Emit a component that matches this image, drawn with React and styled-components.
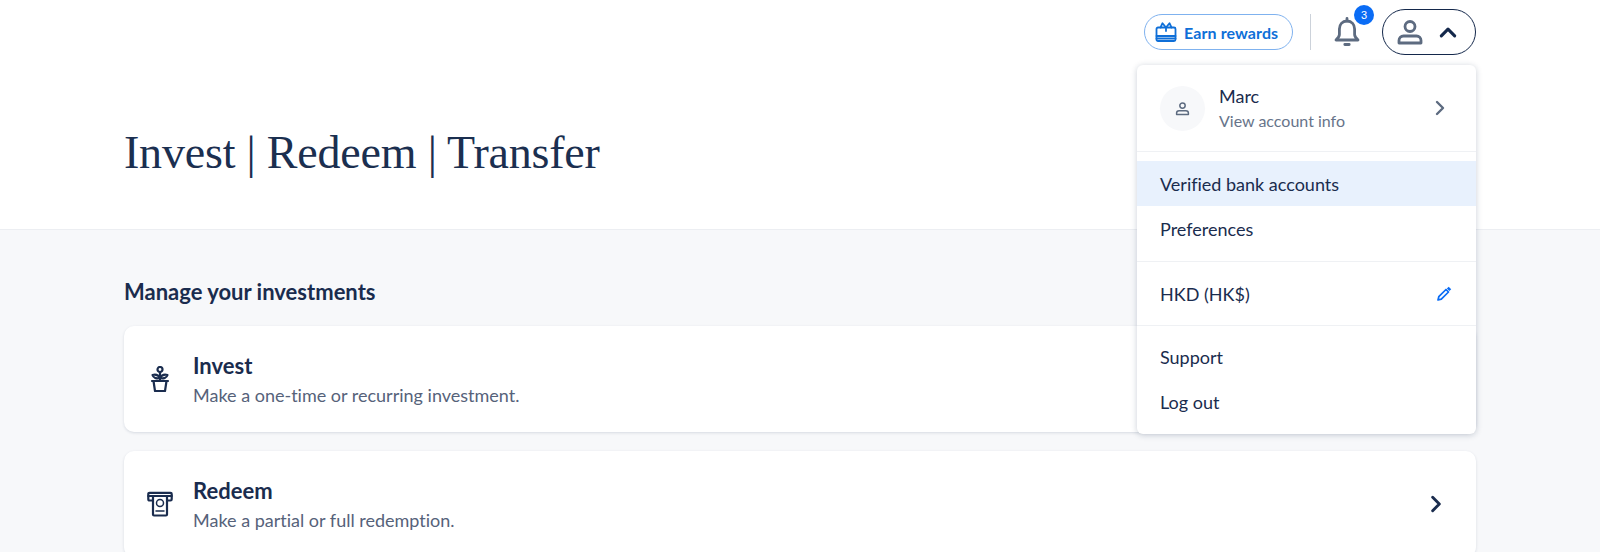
import React from 'react'
import styled, { createGlobalStyle } from 'styled-components'

const actions = [
  { title: 'Invest', text: 'Make a one-time or recurring investment.', icon: 'plant' },
  { title: 'Redeem', text: 'Make a partial or full redemption.', icon: 'atm' },
]

function GiftIcon() {
  return (
    <svg width="22" height="22" viewBox="0 0 22 22" fill="none" stroke="currentColor" strokeWidth="1.8" strokeLinejoin="round" strokeLinecap="round">
      <rect x="1.5" y="6.500" width="19" height="13.500" rx="1.5" />
      <path d="M1.500 15h19M1.500 17.500h19" />
      <path d="M11 6.500 7.500 2.200 5.500 6.500M11 6.500l3.500-4.300 2 4.300M11 6.500V10" />
    </svg>
  )
}

function BellIcon() {
  return (
    <svg width="28" height="32" viewBox="0 0 28 32" fill="none" stroke="currentColor" strokeWidth="2.800" strokeLinejoin="round" strokeLinecap="round">
      <path d="M14 5c-4.800 0-7.600 3.500-7.600 8.100v5.400c0 2.300-1.600 3.700-3.400 5.500h22c-1.800-1.800-3.400-3.200-3.400-5.500v-5.400C21.600 8.500 18.800 5 14 5Z" />
      <path d="M14 2.500V5M11.800 28.500h4.400" />
    </svg>
  )
}

function PersonIcon({ size = 28 }) {
  return (
    <svg width={size} height={size} viewBox="0 0 28 28" fill="none" stroke="currentColor" strokeWidth="2.800" strokeLinejoin="round">
      <circle cx="14" cy="8.500" r="5" />
      <path d="M3 25v-2.500C3 20 5 18 7.500 18h13c2.500 0 4.500 2 4.500 4.500V25Z" />
    </svg>
  )
}

function Chevron({ dir = 'right', size = 18, weight = 2.6 }) {
  const d = dir === 'up' ? 'M3 12.500 9 6.500l6 6' : 'M6 3l6 6-6 6'
  return (
    <svg width={size} height={size} viewBox="0 0 18 18" fill="none" stroke="currentColor" strokeWidth={weight} strokeLinecap="round" strokeLinejoin="round">
      <path d={d} />
    </svg>
  )
}

function PencilIcon() {
  return (
    <svg width="16" height="16" viewBox="0 0 16 16" fill="none" stroke="currentColor" strokeWidth="1.700" strokeLinejoin="round">
      <path d="M2 14l.8-3.300 7.200-7.200 2.500 2.500-7.200 7.200L2 14Z" />
      <path d="M11.800 1.700l2.500 2.500" strokeWidth="2.600" />
    </svg>
  )
}

function PlantIcon() {
  return (
    <svg width="20" height="27" viewBox="0 0 20 27" fill="none" stroke="currentColor" strokeWidth="2.200" strokeLinejoin="round" strokeLinecap="round">
      <circle cx="10" cy="3.500" r="2.500" />
      <path d="M10 6v9" />
      <path d="M10 12c-1.500-2.800-4.500-3.800-7.500-3 .8 2.700 4 4 7.500 3ZM10 12c1.500-2.800 4.500-3.800 7.500-3-.8 2.700-4 4-7.500 3Z" />
      <path d="M2 15h16M3.500 15l1.500 10h10l1.500-10" />
    </svg>
  )
}

function AtmIcon() {
  return (
    <svg width="26" height="26" viewBox="0 0 26 26" fill="none" stroke="currentColor" strokeWidth="2.200" strokeLinejoin="round" strokeLinecap="round">
      <path d="M5.500 9.500H2.500c-.8 0-1.200-.5-1.200-1.200V3c0-.8.500-1.200 1.200-1.200h21c.8 0 1.200.4 1.200 1.200v5.300c0 .7-.4 1.200-1.200 1.200h-3" />
      <path d="M1.300 5h23.400" />
      <rect x="6" y="5" width="14" height="19.500" rx="1" />
      <circle cx="13" cy="12" r="3.500" strokeWidth="1.500" />
      <path d="M9 20h8" strokeWidth="1.500" />
    </svg>
  )
}

export default function App() {
  return (
    <>
      <GlobalStyle />
      <Page>
        <Header>
          <TopBar>
            <RewardsButton>
              <GiftIcon />
              Earn rewards
            </RewardsButton>
            <BarDivider />
            <BellButton>
              <BellIcon />
              <Badge>3</Badge>
            </BellButton>
            <AccountButton>
              <PersonIcon />
              <Chevron dir="up" size={20} weight={2.8} />
            </AccountButton>
          </TopBar>
          <Title>Invest | Redeem | Transfer</Title>
        </Header>

        <Main>
          <SectionTitle>Manage your investments</SectionTitle>
          <CardList>
            {actions.map((a) => (
              <Card key={a.title}>
                <CardIcon>{a.icon === 'plant' ? <PlantIcon /> : <AtmIcon />}</CardIcon>
                <CardBody>
                  <CardTitle>{a.title}</CardTitle>
                  <CardText>{a.text}</CardText>
                </CardBody>
                <Chevron size={20} weight={2.6} />
              </Card>
            ))}
          </CardList>
        </Main>

        <Menu>
          <ProfileRow>
            <Avatar><PersonIcon size={15} /></Avatar>
            <ProfileText>
              <ProfileName>Marc</ProfileName>
              <ProfileHint>View account info</ProfileHint>
            </ProfileText>
            <ProfileArrow><Chevron size={18} weight={2.4} /></ProfileArrow>
          </ProfileRow>
          <MenuGroup>
            <MenuItem $active>Verified bank accounts</MenuItem>
            <MenuItem>Preferences</MenuItem>
          </MenuGroup>
          <CurrencyRow>
            HKD (HK$)
            <EditLink><PencilIcon /></EditLink>
          </CurrencyRow>
          <LastGroup>
            <MenuItem>Support</MenuItem>
            <MenuItem>Log out</MenuItem>
          </LastGroup>
        </Menu>
      </Page>
    </>
  )
}

const GlobalStyle = createGlobalStyle`
  html, body {
    margin: 0;
    padding: 0;
    background: #f7f8fa;
  }
  * {
    box-sizing: border-box;
  }
`

const Page = styled.div`
  position: relative;
  height: 552px;
  overflow: hidden;
  font-family: Lato, "Noto Sans", sans-serif;
  font-variant-ligatures: none;
  color: #1a2c4e;
  background: #f7f8fa;
`

const Header = styled.header`
  height: 230px;
  padding: 0 124px;
  background: #fff;
  border-bottom: 1px solid #eceef2;
`

const TopBar = styled.div`
  display: flex;
  justify-content: flex-end;
  align-items: center;
  height: 64px;
`

const RewardsButton = styled.button`
  display: flex;
  align-items: center;
  gap: 7px;
  width: 149px;
  height: 36px;
  padding: 0 0 0 10px;
  margin-right: 17px;
  border: 1px solid #7fb2ef;
  border-radius: 18px;
  background: #fff;
  color: #0f6fd8;
  font-family: inherit;
  font-size: 16px;
  font-weight: 700;
  letter-spacing: 0.1px;
`

const BarDivider = styled.div`
  width: 1px;
  height: 36px;
  background: #ccd2da;
`

const BellButton = styled.div`
  position: relative;
  display: flex;
  justify-content: center;
  width: 71px;
  color: #5d6b80;
`

const Badge = styled.span`
  position: absolute;
  top: -11px;
  left: 43px;
  display: flex;
  align-items: center;
  justify-content: center;
  width: 20px;
  height: 20px;
  border-radius: 50%;
  background: #0a6cf5;
  color: #fff;
  font-family: "Liberation Sans", sans-serif;
  font-size: 11px;
`

const AccountButton = styled.div`
  display: flex;
  align-items: center;
  gap: 14px;
  width: 94px;
  height: 46px;
  padding-left: 13px;
  border: 1.5px solid #14284b;
  border-radius: 23px;
  color: #5d6b80;

  svg:last-child {
    color: #14284b;
  }
`

const Title = styled.h1`
  margin: 60px 0 0;
  font-family: "Liberation Serif", serif;
  font-size: 46px;
  letter-spacing: -0.2px;
  line-height: 58px;
  font-weight: 400;
  color: #1b2f50;
`

const Main = styled.main`
  padding: 47px 124px 0;
`

const SectionTitle = styled.h2`
  margin: 0 0 19px;
  font-size: 22px;
  line-height: 30px;
  font-weight: 700;
`

const CardList = styled.div`
  display: flex;
  flex-direction: column;
  gap: 19px;
`

const Card = styled.div`
  display: flex;
  align-items: center;
  flex-shrink: 0;
  height: 106px;
  padding: 0 30px 0 23px;
  border-radius: 10px;
  background: #fff;
  box-shadow: 0 1px 3px rgba(20, 40, 75, 0.14);
`

const CardIcon = styled.div`
  display: flex;
  justify-content: center;
  width: 26px;
  margin-right: 20px;
`

const CardBody = styled.div`
  flex: 1;
`

const CardTitle = styled.div`
  font-size: 22px;
  line-height: 28px;
  font-weight: 700;
`

const CardText = styled.div`
  margin-top: 3px;
  font-size: 18px;
  line-height: 24px;
  color: #56627a;
`

const Menu = styled.div`
  position: absolute;
  top: 65px;
  left: 1137px;
  width: 339px;
  height: 369px;
  border-radius: 6px;
  background: #fff;
  box-shadow: 0 1px 6px rgba(20, 40, 75, 0.22);
`

const ProfileRow = styled.div`
  display: flex;
  align-items: center;
  height: 87px;
  padding: 0 27px 0 23px;
  border-bottom: 1px solid #eff1f4;
`

const Avatar = styled.div`
  display: flex;
  align-items: center;
  justify-content: center;
  width: 45px;
  height: 45px;
  border-radius: 50%;
  background: #f7f8fa;
  color: #5d6b80;
`

const ProfileText = styled.div`
  flex: 1;
  margin-left: 14px;
`

const ProfileName = styled.div`
  font-size: 18px;
  line-height: 24px;
`

const ProfileHint = styled.div`
  margin-top: 1px;
  font-size: 16px;
  line-height: 24px;
  color: #67748a;
`

const ProfileArrow = styled.div`
  display: flex;
  color: #5d6b80;
`

const MenuGroup = styled.div`
  padding: 9px 0 10px;
  border-bottom: 1px solid #eff1f4;
`

const LastGroup = styled.div`
  padding: 8px 0;
`

const MenuItem = styled.div`
  display: flex;
  align-items: center;
  height: 45px;
  padding: 0 23px;
  font-size: 18px;
  background: ${(p) => (p.$active ? '#e8f1fd' : 'transparent')};
`

const CurrencyRow = styled.div`
  display: flex;
  align-items: center;
  justify-content: space-between;
  height: 64px;
  padding: 0 24px 0 23px;
  font-size: 18px;
  border-bottom: 1px solid #eff1f4;
`

const EditLink = styled.span`
  display: flex;
  color: #0a6cf5;
`
